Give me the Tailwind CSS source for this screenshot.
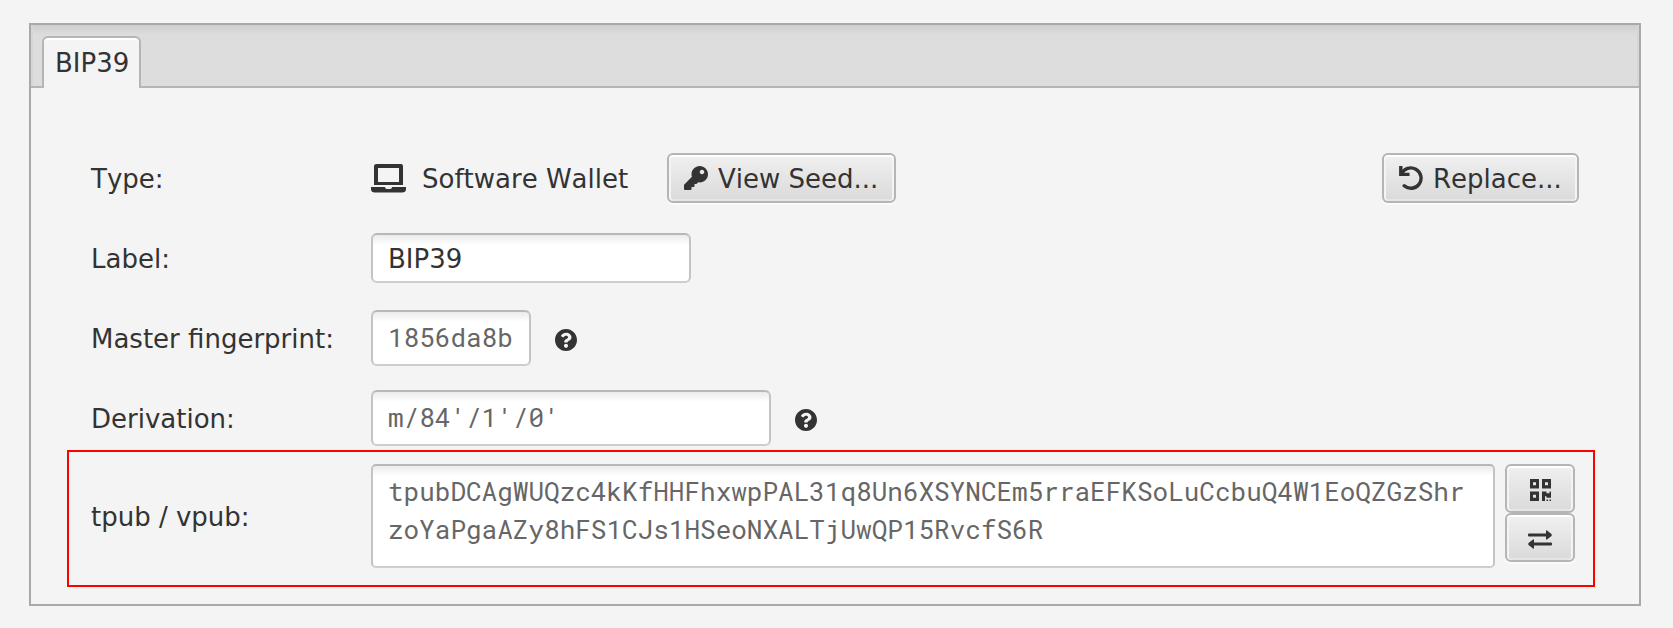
<!DOCTYPE html>
<html lang="en">
<head>
<meta charset="utf-8">
<title>Keystore</title>
<script src="https://cdn.jsdelivr.net/npm/@tailwindcss/browser@4"></script>
</head>
<body class="h-[628px] overflow-hidden bg-[#f4f4f4] pt-[23px] pl-[29px] font-['DejaVu_Sans',sans-serif] text-[26px] leading-[30px] text-[#333] [font-kerning:none]">
<main class="flex h-[583px] w-[1612px] flex-col border-2 border-[#a9a9a9]">
  <nav class="flex h-[63px] shrink-0 items-end border-b-2 border-[#b5b5b5] bg-[#ddd] bg-linear-to-b from-[#cecece] to-[#ddd] to-[10px] pl-[11px] shadow-[inset_2px_0_0_#d6d6d6,inset_-2px_0_0_#d6d6d6]">
    <button class="-mb-[2px] flex h-[52px] w-[99px] rounded-t-[6px] border-2 border-b-0 border-[#b5b5b5] bg-[#f4f4f4] pt-[10px] pl-[11px] shadow-[inset_0_2px_0_#fff]">BIP39</button>
  </nav>
  <form class="flex flex-col pl-[60px]">
    <div class="mt-[65px] flex h-[50px] items-center">
      <label class="w-[280px] pt-[2px]">Type:</label>
      <svg class="mr-[16px] h-[29px] w-[35px]" viewBox="0 0 35 29" fill="#333"><path fill-rule="evenodd" d="M6 0H30Q32 0 32 2V21H3V2Q3 0 6 0ZM7 4V18H28V4Z"/><path d="M0 23H14Q14 25 16 25H19Q21 25 21 23H35V25Q35 28.500 31 28.500H4Q0 28.500 0 25Z"/></svg>
      <span class="w-[245px] pt-[2px]">Software Wallet</span>
      <button type="button" class="flex h-[50px] w-[229px] items-center gap-[10px] rounded-[6px] border-2 border-[#b5b5b5] bg-linear-to-b from-[#f0f0f0] to-[#dadada] pl-[15px] whitespace-nowrap shadow-[0_2px_0_#fbfbfb,inset_0_2px_0_#fff,inset_2px_0_0_#f4f4f4,inset_-2px_0_0_#f4f4f4,inset_0_-2px_0_#e5e5e5]">
        <svg class="size-6 shrink-0" viewBox="0 0 512 512" fill="#333"><path d="M512 176.001C512 273.203 433.202 352 336 352c-11.220 0-22.190-1.062-32.827-3.069l-24.012 27.014A23.999 23.999 0 0 1 261.223 384H224v40c0 13.255-10.745 24-24 24h-40v40c0 13.255-10.745 24-24 24H24c-13.255 0-24-10.745-24-24v-78.059c0-6.365 2.529-12.470 7.029-16.971l161.802-161.802C163.108 213.814 160 195.271 160 176 160 78.798 238.797.001 335.999 0 433.488-.001 512 78.511 512 176.001zM336 128c0 26.510 21.490 48 48 48s48-21.490 48-48-21.490-48-48-48-48 21.490-48 48z"/></svg>
        <span class="pt-[2px]">View Seed...</span>
      </button>
      <button type="button" class="ml-[486px] flex h-[50px] w-[197px] items-center gap-[10px] rounded-[6px] border-2 border-[#b5b5b5] bg-linear-to-b from-[#f0f0f0] to-[#dadada] pl-[15px] whitespace-nowrap shadow-[0_2px_0_#fbfbfb,inset_0_2px_0_#fff,inset_2px_0_0_#f4f4f4,inset_-2px_0_0_#f4f4f4,inset_0_-2px_0_#e5e5e5]">
        <svg class="size-6 shrink-0" viewBox="0 0 24 24" fill="none" stroke="#333"><path d="M1.800 0V8.400H10.500" stroke-width="3.400"/><path d="M2.500 8A10.200 10.200 0 1 1 5.200 19.800" stroke-width="3.400" stroke-linecap="round"/></svg>
        <span class="pt-[2px]">Replace...</span>
      </button>
    </div>
    <div class="mt-[30px] flex h-[50px] items-center">
      <label class="w-[280px] pt-[2px]">Label:</label>
      <div class="flex h-[50px] w-[320px] items-center rounded-[6px] border-2 border-t-[#b8b8b8] border-x-[#c4c4c4] border-b-[#cdcdcd] bg-white bg-linear-to-b from-[#ebebeb] to-white to-[10px] pt-[2px] pl-[15px]">BIP39</div>
    </div>
    <div class="mt-[27px] flex h-[56px] items-center">
      <label class="w-[280px] pt-[2px]">Master fingerprint:</label>
      <div class="flex h-[56px] w-[160px] items-center rounded-[6px] border-2 border-t-[#b8b8b8] border-x-[#c4c4c4] border-b-[#cdcdcd] bg-white bg-linear-to-b from-[#ebebeb] to-white to-[10px] pb-[2px] pl-[15px] font-['Roboto_Mono','DejaVu_Sans_Mono',monospace] text-[#666]">1856da8b</div>
      <svg class="mt-[4px] ml-6 size-[22px]" viewBox="8 8 496 496" fill="#333"><path d="M504 256c0 136.997-111.043 248-248 248S8 392.997 8 256C8 119.083 119.043 8 256 8s248 111.083 248 248zM262.655 90c-54.497 0-89.255 22.957-116.549 63.758-3.536 5.286-2.353 12.415 2.715 16.258l34.699 26.310c5.205 3.947 12.621 3.008 16.665-2.122 17.864-22.658 30.113-35.797 57.303-35.797 20.429 0 45.698 13.148 45.698 32.958 0 14.976-12.363 22.667-32.534 33.976C247.128 238.528 216 254.941 216 296v4c0 6.627 5.373 12 12 12h56c6.627 0 12-5.373 12-12v-1.333c0-28.462 83.186-29.647 83.186-106.667 0-58.002-60.165-102-116.531-102zM256 338c-25.365 0-46 20.635-46 46 0 25.364 20.635 46 46 46s46-20.636 46-46c0-25.365-20.635-46-46-46z"/></svg>
    </div>
    <div class="mt-6 flex h-[56px] items-center">
      <label class="w-[280px] pt-[2px]">Derivation:</label>
      <div class="flex h-[56px] w-[400px] items-center rounded-[6px] border-2 border-t-[#b8b8b8] border-x-[#c4c4c4] border-b-[#cdcdcd] bg-white bg-linear-to-b from-[#ebebeb] to-white to-[10px] pb-[2px] pl-[15px] font-['Roboto_Mono','DejaVu_Sans_Mono',monospace] text-[#666]">m/84'/1'/0'</div>
      <svg class="mt-[4px] ml-6 size-[22px]" viewBox="8 8 496 496" fill="#333"><path d="M504 256c0 136.997-111.043 248-248 248S8 392.997 8 256C8 119.083 119.043 8 256 8s248 111.083 248 248zM262.655 90c-54.497 0-89.255 22.957-116.549 63.758-3.536 5.286-2.353 12.415 2.715 16.258l34.699 26.310c5.205 3.947 12.621 3.008 16.665-2.122 17.864-22.658 30.113-35.797 57.303-35.797 20.429 0 45.698 13.148 45.698 32.958 0 14.976-12.363 22.667-32.534 33.976C247.128 238.528 216 254.941 216 296v4c0 6.627 5.373 12 12 12h56c6.627 0 12-5.373 12-12v-1.333c0-28.462 83.186-29.647 83.186-106.667 0-58.002-60.165-102-116.531-102zM256 338c-25.365 0-46 20.635-46 46 0 25.364 20.635 46 46 46s46-20.636 46-46c0-25.365-20.635-46-46-46z"/></svg>
    </div>
    <div class="mt-[4px] -ml-[24px] flex h-[137px] w-[1528px] items-start border-2 border-[#ff0000] pt-[12px] pl-[22px]">
      <label class="mt-[38px] w-[280px]">tpub / vpub:</label>
      <div class="h-[104px] w-[1124px] rounded-[5px] border-2 border-t-[#b8b8b8] border-x-[#c4c4c4] border-b-[#cdcdcd] bg-white bg-linear-to-b from-[#ebebeb] to-white to-[10px] pt-[6px] pl-[15px] font-['Roboto_Mono','DejaVu_Sans_Mono',monospace] leading-[38px] text-[#666]">tpubDCAgWUQzc4kKfHHFhxwpPAL31q8Un6XSYNCEm5rraEFKSoLuCcbuQ4W1EoQZGzShr<br>zoYaPgaAZy8hFS1CJs1HSeoNXALTjUwQP15RvcfS6R</div>
      <div class="ml-[10px] flex w-[70px] flex-col">
        <button type="button" class="flex h-[49px] items-center justify-center rounded-[6px] border-2 border-[#b5b5b5] bg-linear-to-b from-[#f0f0f0] to-[#dadada] shadow-[inset_0_2px_0_#fff,inset_2px_0_0_#f4f4f4,inset_-2px_0_0_#f4f4f4,inset_0_-2px_0_#e5e5e5]">
          <svg class="mt-[3px] h-[22px] w-[21px]" viewBox="0 0 448 448" preserveAspectRatio="none" fill="#333"><path d="M0 192h192V0H0v192zM64 64h64v64H64V64zM256 0v192h192V0H256zm128 128h-64V64h64v64zM0 448h192V256H0v192zm64-128h64v64H64v-64zm352-64h32v128h-96v-32h-32v96h-64V256h96v32h64v-32zm0 160h32v32h-32v-32zm-64 0h32v32h-32v-32z"/></svg>
        </button>
        <button type="button" class="flex h-[49px] items-center justify-center rounded-[6px] border-2 border-[#b5b5b5] bg-linear-to-b from-[#f0f0f0] to-[#dadada] shadow-[0_2px_0_#fbfbfb,inset_0_2px_0_#fff,inset_2px_0_0_#f4f4f4,inset_-2px_0_0_#f4f4f4,inset_0_-2px_0_#e5e5e5]">
          <svg class="mt-[3px] h-[19px] w-6" viewBox="0 0 24 19" fill="#333"><path d="M1 3.500H18V1Q18 0 19 .5L23.500 4Q24 5 23.500 6L19 9.500Q18 10 18 9V6.500H1Q0 6.500 0 5.500V4.500Q0 3.500 1 3.500ZM23 12.500H6V10Q6 9 5 9.500L.5 13Q0 14 .5 15L5 18.500Q6 19 6 18V15.500H23Q24 15.500 24 14.500V13.500Q24 12.500 23 12.500Z"/></svg>
        </button>
      </div>
    </div>
  </form>
</main>
</body>
</html>
